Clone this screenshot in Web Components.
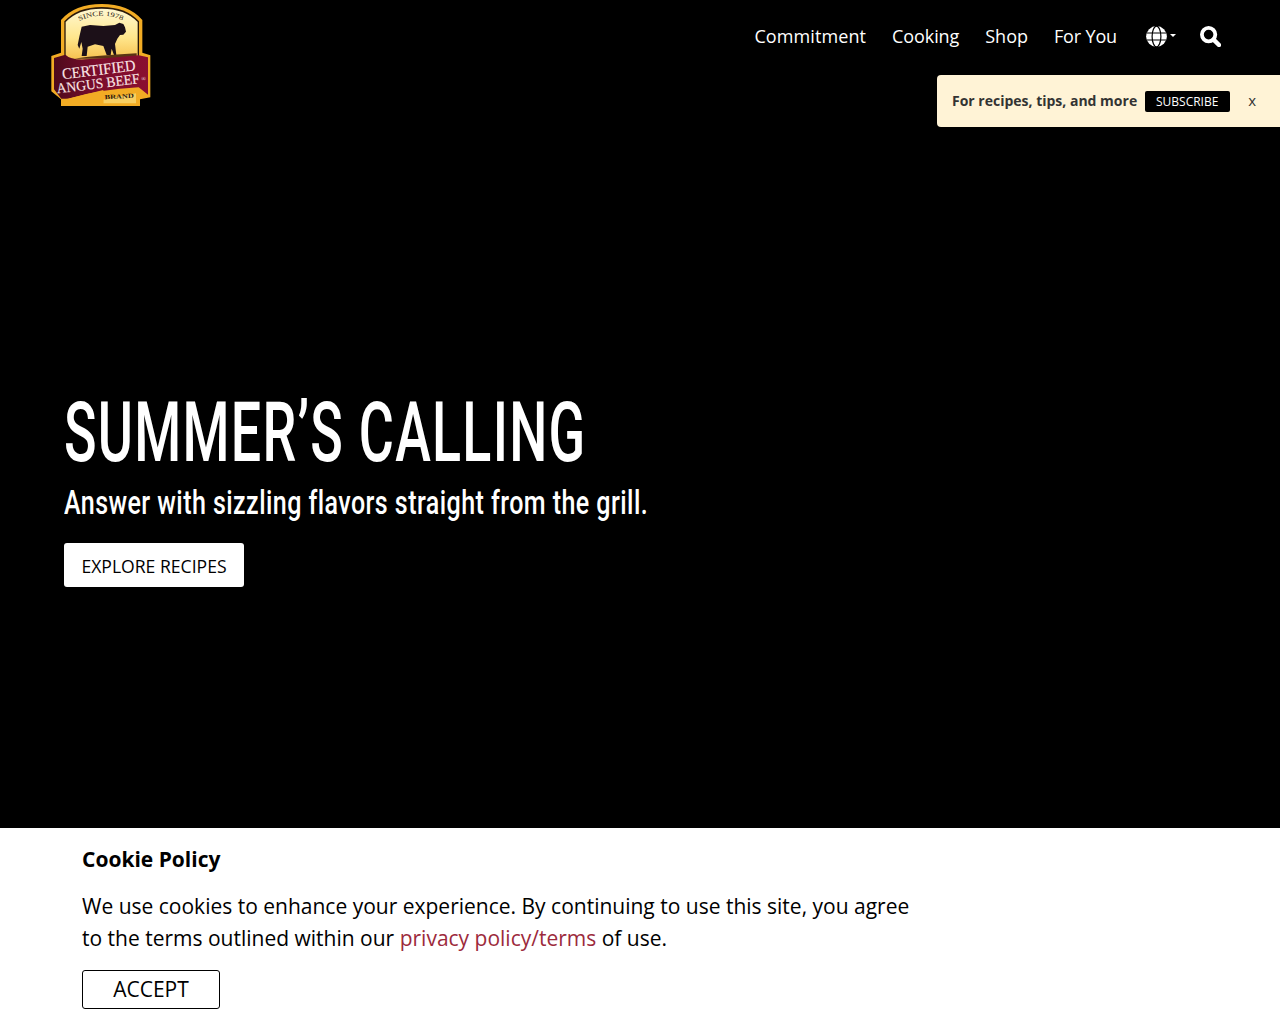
<!DOCTYPE html>
<html lang="en">
<head>
<meta charset="utf-8">
<title>Certified Angus Beef</title>
<style>
  html, body { margin: 0; padding: 0; background: #000; }
  body { font-family: "Open Sans", sans-serif; }
</style>
</head>
<body>
<cab-page>
  <cab-header slot="header"></cab-header>
  <cab-subscribe slot="overlay"></cab-subscribe>
  <cab-hero slot="hero" title="SUMMER’S CALLING" sub="Answer with sizzling flavors straight from the grill." cta="EXPLORE RECIPES"></cab-hero>
  <cab-cookie slot="cookie"></cab-cookie>
</cab-page>
<script>
class CabPage extends HTMLElement {
  constructor() {
    super();
    this.attachShadow({ mode: "open" });
    this.shadowRoot.innerHTML = `
      <style>
        :host { display: flex; flex-direction: column; position: relative; height: 1024px; overflow: hidden; background: #000; }
        .hero { flex: 1; display: flex; }
      </style>
      <slot name="header"></slot>
      <slot name="overlay"></slot>
      <div class="hero"><slot name="hero"></slot></div>
      <slot name="cookie"></slot>
    `;
  }
}

class CabHeader extends HTMLElement {
  constructor() {
    super();
    this.attachShadow({ mode: "open" });
    this.shadowRoot.innerHTML = `
      <style>
        :host { display: flex; justify-content: space-between; align-items: flex-start; height: 115px; padding-left: 40px; color: #fff; font: 18px/24px "Open Sans", sans-serif; }
        svg { display: block; }
        nav { display: flex; align-items: center; height: 24px; margin-top: 24px; padding-right: 59px; }
        a { color: #fff; text-decoration: none; margin-right: 26px; }
        a:nth-child(1) { letter-spacing: .1px; }
        a:nth-child(2) { letter-spacing: -.1px; }
        a:nth-child(4) { margin-right: 29px; letter-spacing: -.15px; }
        .globe { display: flex; align-items: flex-start; margin-right: 24px; }
        .caret { width: 0; height: 0; border: 3px solid transparent; border-top-color: #fff; border-bottom: 0; margin: 8px 0 0 3px; }
      </style>
      <cab-logo></cab-logo>
      <nav>
        <a>Commitment</a><a>Cooking</a><a>Shop</a><a>For You</a>
        <span class="globe">
          <svg width="21" height="21" viewBox="0 0 21 21"><circle cx="10.5" cy="10.5" r="10.4" fill="#fff"/><g fill="none" stroke="#000" stroke-width="1.2"><ellipse cx="10.5" cy="10.5" rx="4.4" ry="10.4"/><path d="M.4 7h20.2M.4 14h20.2"/></g></svg>
          <span class="caret"></span>
        </span>
        <svg width="21" height="21" viewBox="0 0 21 21"><circle cx="8.6" cy="8.6" r="6.7" fill="none" stroke="#fff" stroke-width="3.8"/><path d="M13.6 13.6L19 19" stroke="#fff" stroke-width="4.4" stroke-linecap="round"/></svg>
      </nav>
    `;
  }
}

class CabLogo extends HTMLElement {
  constructor() {
    super();
    this.attachShadow({ mode: "open" });
    this.shadowRoot.innerHTML = `
      <style>
        :host { display: block; width: 125px; height: 115px; }
        svg { display: block; }
        text { font-family: "Liberation Serif", serif; }
      </style>
      <svg width="125" height="115" viewBox="0 0 375 345">
        <defs>
          <linearGradient id="sky" x1="0" y1="0" x2="0" y2="1">
            <stop offset="0" stop-color="#fff8d2"/><stop offset=".5" stop-color="#ffe68c"/><stop offset="1" stop-color="#f4b43a"/>
          </linearGradient>
          <linearGradient id="band" x1="0" y1="0" x2="1" y2="0">
            <stop offset="0" stop-color="#4e0a1c"/><stop offset=".45" stop-color="#7a0c2c"/><stop offset="1" stop-color="#8a0f30"/>
          </linearGradient>
          <path id="arc" d="M118 63Q183 31 252 63"/>
        </defs>
        <path d="M63 60Q104 12 185 12Q266 12 307 60V158L331 166V292L300 298V318H63V298L34 274V168L63 158Z" fill="#f2ac24"/>
        <path d="M73 64Q112 21 185 21Q258 21 297 64V200H73Z" fill="#2a1808"/>
        <path d="M77 66Q114 26 185 26Q256 26 293 66V200H77Z" fill="url(#sky)"/>
        <path d="M125 80L118 110L113 135L118 146L124 126L128 146L125 168H140L143 140L165 133L190 138L200 165H212L215 146L222 165H229L225 132L232 116L240 105L250 104L258 95L255 82L250 72L238 68L225 75L190 78L150 75Z" fill="#1c1018"/>
        <path d="M82 180Q140 168 290 160V176H82Z" fill="#5a3414"/>
        <path d="M42 174L76 164Q92 180 135 178Q220 174 296 166L324 172V284L296 262Q180 268 84 296L64 296L42 268Z" fill="url(#band)"/>
        <path d="M190 299L288 280V310H190Z" fill="#f8cf62"/>
        <path d="M71 298L84 296L190 270V309H71Z" fill="#f2ac24"/>
        <text font-size="20" fill="#2a1a12"><textPath href="#arc" textLength="134" lengthAdjust="spacingAndGlyphs">SINCE 1978</textPath></text>
        <text transform="translate(68 238) rotate(-7)" font-size="47" fill="#fbe6e6" stroke="#fbe6e6" stroke-width=".4" textLength="222" lengthAdjust="spacingAndGlyphs">CERTIFIED</text>
        <text transform="translate(52 280) rotate(-7)" font-size="43" fill="#fbe6e6" stroke="#fbe6e6" stroke-width=".4" textLength="250" lengthAdjust="spacingAndGlyphs">ANGUS BEEF</text>
        <text x="304" y="243" font-size="18" fill="#fbe6e6">®</text>
        <text transform="translate(194 298) rotate(-3)" font-size="19" font-weight="700" fill="#2a1a12" textLength="88" lengthAdjust="spacingAndGlyphs">BRAND</text>
      </svg>
    `;
  }
}

class CabSubscribe extends HTMLElement {
  constructor() {
    super();
    this.attachShadow({ mode: "open" });
    this.shadowRoot.innerHTML = `
      <style>
        :host { position: absolute; top: 75px; right: 0; width: 343px; height: 52px; box-sizing: border-box; padding-left: 15px; display: flex; align-items: center; background: #fff3d6; border-radius: 4px 0 0 4px; color: #333; font: 700 14px/20px "Open Sans", sans-serif; }
        button { margin-left: 8px; width: 85px; height: 21px; padding: 0 1px 0 0; border: 0; border-radius: 2px; background: #000; color: #fff; font: 400 12px/21px "Open Sans", sans-serif; }
        .x { margin: 0 0 2px 18px; font-weight: 400; font-size: 15px; color: #333; }
      </style>
      <span>For recipes, tips, and more</span>
      <button>SUBSCRIBE</button>
      <span class="x">x</span>
    `;
  }
}

class CabHero extends HTMLElement {
  constructor() {
    super();
    this.attachShadow({ mode: "open" });
    this.shadowRoot.innerHTML = `
      <style>
        :host { display: block; padding: 272px 0 0 64px; color: #fff; }
        h1, p { transform-origin: left center; white-space: nowrap; }
        h1 { margin: 0; font: 500 83px/92px Roboto, sans-serif; letter-spacing: 2px; transform: scaleX(.647); }
        p { margin: 0 0 18px; font: 500 34px/46px Roboto, sans-serif; letter-spacing: .6px; transform: scaleX(.736); }
        a { display: inline-block; box-sizing: border-box; width: 180px; height: 44px; text-align: center; background: #fff; color: #000; border-radius: 3px; font: 400 17.6px/46px "Open Sans", sans-serif; }
      </style>
      <h1></h1>
      <p></p>
      <a></a>
    `;
    this.shadowRoot.querySelector("h1").textContent = this.getAttribute("title");
    this.shadowRoot.querySelector("p").textContent = this.getAttribute("sub");
    this.shadowRoot.querySelector("a").textContent = this.getAttribute("cta");
  }
}

class CabCookie extends HTMLElement {
  constructor() {
    super();
    this.attachShadow({ mode: "open" });
    this.shadowRoot.innerHTML = `
      <style>
        :host { display: block; height: 196px; box-sizing: border-box; padding: 17px 0 0 82px; background: #fff; color: #000; font: 400 21px/32px "Open Sans", sans-serif; }
        h2 { margin: 0 0 17px; font: 700 21px/28px "Open Sans", sans-serif; }
        p { margin: 0 0 16px; width: 840px; }
        a { color: #9c2a3c; }
        button { display: block; width: 138px; height: 39px; padding: 0; background: #fff; border: 1px solid #000; border-radius: 3px; color: #000; font: 400 21px/37px "Open Sans", sans-serif; }
      </style>
      <h2>Cookie Policy</h2>
      <p>We use cookies to enhance your experience. By continuing to use this site, you agree to the terms outlined within our <a>privacy policy/terms</a> of use.</p>
      <button>ACCEPT</button>
    `;
  }
}

customElements.define("cab-logo", CabLogo);
customElements.define("cab-page", CabPage);
customElements.define("cab-header", CabHeader);
customElements.define("cab-subscribe", CabSubscribe);
customElements.define("cab-hero", CabHero);
customElements.define("cab-cookie", CabCookie);
</script>
</body>
</html>
